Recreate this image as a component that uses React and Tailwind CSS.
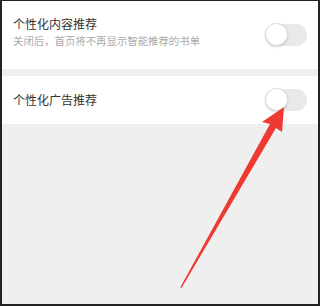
import React from "react";

function Toggle() {
  return (
    <div className="relative w-[42px] h-[22px] rounded-full bg-[#e9e9e9] shrink-0">
      <div className="absolute left-0 top-[-1px] w-[23px] h-[23px] rounded-full bg-white border border-[#dcdcdc] shadow-[0_1px_2px_rgba(0,0,0,0.15)]" />
    </div>
  );
}

export default function App() {
  return (
    <div
      className="relative w-[320px] h-[306px] bg-[#efefef] border-t border-l-2 border-r-2 border-b-2 border-[#222] flex flex-col overflow-hidden"
      style={{ fontFamily: '"Noto Sans CJK SC", "Noto Sans", sans-serif' }}
    >
      <div className="h-[68px] bg-white flex items-center justify-between pl-[11px] pr-[11px]">
        <div className="flex flex-col mb-[6px]">
          <div className="text-[12px] leading-[16px] text-[#333]">个性化内容推荐</div>
          <div className="text-[10.4px] leading-[14px] text-[#aaa] mt-[2px]">关闭后，首页将不再显示智能推荐的书单</div>
        </div>
        <Toggle />
      </div>
      <div className="h-[7px]" />
      <div className="h-[48px] bg-white flex items-center justify-between pl-[11px] pr-[11px]">
        <div className="text-[12px] leading-[16px] text-[#333]">个性化广告推荐</div>
        <Toggle />
      </div>
      <div className="flex-1" />
      <svg className="absolute left-0 top-0 pointer-events-none" width="320" height="306" viewBox="0 0 320 306" style={{ left: -2, top: -1 }}>
        <polygon
          points="284,107 282,132 276,128 181.5,288 180.5,287 270,124 262,122"
          fill="#ef3a34"
        />
      </svg>
    </div>
  );
}
